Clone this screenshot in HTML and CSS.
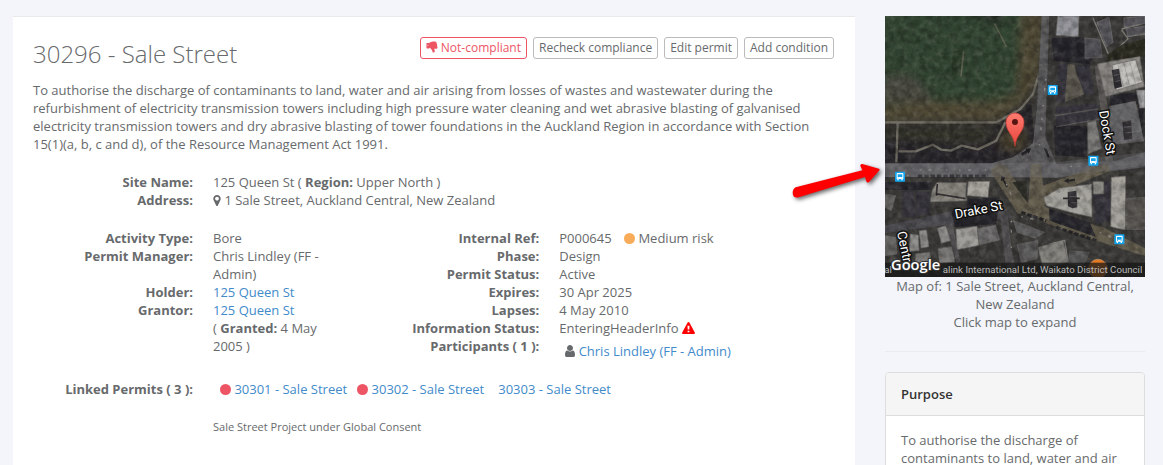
FILE: index.html
```html
<!DOCTYPE html>
<html lang="en">
<head>
<meta charset="utf-8">
<title>30296 - Sale Street</title>
<link rel="stylesheet" href="styles.css">
</head>
<body>
<div class="page">
  <main class="permit">
    <header class="permit-header">
      <h1 class="permit-title">30296 - Sale Street</h1>
      <div class="actions">
        <button type="button" class="btn btn-danger"><svg class="icon icon-thumb" viewBox="0 0 1664 1792" aria-hidden="true"><path d="M320 576q0 26-19 45t-45 19q-27 0-45.500-19t-18.500-45q0-27 18.500-45.500t45.500-18.500q26 0 45 18.500t19 45.500zM480 960v-640q0-26-19-45t-45-19h-288q-26 0-45 19t-19 45v640q0 26 19 45t45 19h288q26 0 45-19t19-45zM1600 891q0-86-55-149 15-44 15-76 3-76-43-137 17-56 0-117-15-57-54-94 9-112-49-181-64-76-197-78h-129q-66 0-144 15.500t-121.500 29-120.500 39.500q-123 43-158 44-26 1-45 19.500t-19 44.500v641q0 25 18 43.500t43 20.500q24 2 76 59t101 121q68 87 101 120 18 18 31 48t17.500 48.500 13.500 60.500q7 39 12.500 61t19.500 52 34 50q19 19 45 19 46 0 82.500-10.500t60-26 40-40.500 24-45 12-50 5-45 .5-39q0-38-9.500-76t-19-60-27.500-56q-3-6-10-18t-11-22-8-24h277q78 0 135-57t57-135z"/></svg> Not-compliant</button>
        <button type="button" class="btn">Recheck compliance</button>
        <button type="button" class="btn">Edit permit</button>
        <button type="button" class="btn">Add condition</button>
      </div>
    </header>
    <p class="description">To authorise the discharge of contaminants to land, water and air arising from losses of wastes and wastewater during the refurbishment of electricity transmission towers including high pressure water cleaning and wet abrasive blasting of galvanised electricity transmission towers and dry abrasive blasting of tower foundations in the Auckland Region in accordance with Section 15(1)(a, b, c and d), of the Resource Management Act 1991.</p>

    <dl class="details">
      <dt>Site Name:</dt><dd>125 Queen St ( <b>Region:</b> Upper North )</dd>
      <dt>Address:</dt><dd><svg class="icon icon-marker" viewBox="0 0 1024 1792" aria-hidden="true"><path d="M768 640q0-106-75-181t-181-75-181 75-75 181 75 181 181 75 181-75 75-181zM1024 640q0 109-33 179l-364 774q-16 33-47.500 52t-67.500 19-67.500-19-46.500-52l-365-774q-33-70-33-179 0-212 150-362t362-150 362 150 150 362z"/></svg> 1 Sale Street, Auckland Central, New Zealand</dd>
    </dl>

    <div class="columns">
      <dl class="details">
        <dt>Activity Type:</dt><dd>Bore</dd>
        <dt>Permit Manager:</dt><dd>Chris Lindley (FF - Admin)</dd>
        <dt>Holder:</dt><dd><a href="#">125 Queen St</a></dd>
        <dt>Grantor:</dt><dd><a href="#">125 Queen St</a><br>( <b>Granted:</b> 4 May 2005&nbsp;)</dd>
      </dl>
      <dl class="details">
        <dt>Internal Ref:</dt><dd>P000645 <span class="risk"><i class="dot dot-medium"></i> Medium risk</span></dd>
        <dt>Phase:</dt><dd>Design</dd>
        <dt>Permit Status:</dt><dd>Active</dd>
        <dt>Expires:</dt><dd>30 Apr 2025</dd>
        <dt>Lapses:</dt><dd>4 May 2010</dd>
        <dt>Information Status:</dt><dd>EnteringHeaderInfo <svg class="icon icon-warning" viewBox="0 0 13 12" role="img" aria-label="Warning"><path fill-rule="evenodd" d="M6.500 0Q7 0 7.400.6L12.800 10.600Q13.300 12 12 12H1Q-.3 12 .2 10.600L5.600.6Q6 0 6.500 0ZM5.500 3.700L5.700 7.600H7.300L7.500 3.700ZM5.600 8.700V10.300H7.400V8.700Z"/></svg></dd>
        <dt>Participants ( 1 ):</dt><dd class="participants"><svg class="icon icon-user" viewBox="0 0 1280 1792" aria-hidden="true"><path d="M1280 1399q0 109-62.500 187t-150.500 78h-854q-88 0-150.500-78t-62.500-187q0-85 8.500-160.500t31.500-152 58.500-131 94-89 134.500-34.500q131 128 313 128t313-128q76 0 134.500 34.500t94 89 58.500 131 31.500 152 8.500 160.500zM1024 512q0 159-112.500 271.500t-271.500 112.500-271.500-112.500-112.500-271.500 112.500-271.500 271.500-112.500 271.500 112.500 112.500 271.500z"/></svg> <a href="#">Chris Lindley (FF - Admin)</a></dd>
      </dl>
    </div>

    <dl class="details">
      <dt>Linked Permits ( 3 ):</dt>
      <dd class="linked-list">
        <span><i class="dot dot-high"></i> <a href="#">30301 - Sale Street</a></span>
        <span><i class="dot dot-high"></i> <a href="#">30302 - Sale Street</a></span>
        <span class="unflagged"><a href="#">30303 - Sale Street</a></span>
      </dd>
    </dl>
    <p class="project">Sale Street Project under Global Consent</p>
  </main>

  <aside class="sidebar">
    <svg class="map" viewBox="6 6 780 783" role="img" aria-label="Satellite map of 1 Sale Street">
      <defs>
        <filter id="soft" x="-5%" y="-5%" width="110%" height="110%"><feGaussianBlur stdDeviation="12"/></filter>
        <filter id="grain" x="0" y="0" width="100%" height="100%"><feTurbulence type="fractalNoise" baseFrequency=".055" numOctaves="3" seed="8"/><feColorMatrix values="0 0 0 0 .5  0 0 0 0 .48  0 0 0 0 .42  1.800 0 0 0 -.75"/></filter>
        <filter id="shade" x="0" y="0" width="100%" height="100%"><feTurbulence type="fractalNoise" baseFrequency=".045" numOctaves="3" seed="21"/><feColorMatrix values="0 0 0 0 0  0 0 0 0 0  0 0 0 0 0  2.500 0 0 0 -.95"/></filter>
        <linearGradient id="pin" x1="0" y1="0" x2="0" y2="1"><stop offset="0" stop-color="#ff7c70"/><stop offset="1" stop-color="#e8453c"/></linearGradient>
        <g id="bus"><rect x="-15" y="-15" width="30" height="30" rx="2" fill="#12a5ee"/><path fill="#fff" fill-rule="evenodd" d="M-7-11H7Q10-11 10-8V7H8V11H4V7H-4V11H-8V7H-10V-8Q-10-11-7-11ZM-7-7V1H7V-7ZM-7 3V5H-4V3ZM4 3V5H7V3Z"/></g>
      </defs>
      <rect x="6" y="6" width="780" height="783" fill="#3b3a38"/>
      <path fill="#28262a" d="M6 330H350L440 210 460 440 340 450H6Z"/>
      <g filter="url(#soft)">
        <path fill="#324530" d="M-20-20H420V120L390 250 330 280H-20Z"/>
        <path fill="#4a4a40" d="M-10 195L70 180 115 210 150 262-10 268Z"/>
        <path fill="#504a36" d="M-10 275L120 262 330 262 400 240 415-10H482L470 180 430 260 345 320-10 322Z"/>
        <path fill="#36352c" d="M-10 340H340L300 390-10 372Z"/>
        <path fill="#4b432f" d="M355 350L430 345 425 410 350 405Z"/>
        <path fill="#201f22" d="M300-5H360V20H300Z"/>
      </g>
      <path fill="#2b3b29" d="M210 112H235V183H206Z"/>
      <path fill="none" stroke="#5c5e4c" stroke-width="5" d="M242 112L234 188M334 28L370 98"/>
      <g fill="none" stroke="#706d64" stroke-width="7" stroke-linejoin="round">
        <path d="M6 325H340L412 285 450 240 466 185"/><path d="M44 326L40 445M46 412H98L150 392 175 407 205 410 236 395 285 406 340 380 367 325"/>
      </g>
      <!-- roads -->
      <path fill="#5b5a5c" d="M476 6H499L493 180 487 370 520 450 700 440 786 415V460L520 492 330 489H6V448H325L390 430 450 388 462 280Z"/>
      <path fill="#4b4a4f" d="M6 635L130 608 210 590 360 580 390 610 205 630 6 658Z"/>
      <path fill="#625c4d" d="M322 472L345 448 371 455 436 568 444 450 474 450 480 515 560 485 640 455 675 449 682 470 560 520 490 542 484 575 530 605 660 640 786 703V726L640 680 495 630 450 602 405 600Z"/>
      <path fill="#525052" d="M350 590L372 585 385 700 402 789H372ZM188 630L208 628 232 740 222 750Z"/>
      <path fill="#5a5756" d="M634 155L650 155 673 270 690 440 668 445 653 285Z"/>
      <path fill="#2c2c27" d="M388 505L430 500 434 566 410 535Z"/>
      <!-- dark blocks -->
      <g fill="#26252b">
        <path d="M505 72L600 70 632 130 618 150 512 140Z"/><path d="M512 335H612V430L517 424Z"/><path d="M6 505H145V528H6Z"/><path d="M205 590L215 640 340 630 345 590Z"/><path d="M498 585L620 625 638 668 500 620Z"/><path d="M256 555L350 550 350 580 250 588Z"/><path d="M682 245L757 235 782 285 780 400 765 270 680 275Z"/>
      </g>
      <g fill="#37353d"><path d="M526 148H556L551 265H520Z"/><path d="M580 155L618 150 633 238 590 245Z"/><path d="M518 280L645 268 650 320 520 340Z"/><path d="M57 532L92 528 98 610 60 608ZM98 530L140 535 140 602 100 603Z"/><path d="M628 510L680 500 685 620 636 630Z"/></g>
      <path fill="#5a564e" d="M554 150L575 152 578 175 605 240 545 265Z"/>
      <path stroke="#575654" stroke-width="4" fill="none" d="M516 305L645 285M520 338L648 316"/>
      <!-- roofs -->
      <g stroke="#6a6866" stroke-width="2">
        <path fill="#94959b" d="M524 6H588L586 68 519 64Z"/>
        <path fill="#4e4e54" d="M606 72L650 76 658 130 606 133Z"/>
        <path fill="#8b8884" d="M643 150L770 127 784 218 668 247Z"/>
        <path fill="#c3c1bd" d="M687 153L758 137 778 205 700 229Z"/>
        <path fill="#a5a5a8" d="M760 228H786V282H770Z"/>
        <path fill="#666568" d="M680 277L757 262 782 381 680 392Z"/>
        <path fill="#7c7a78" d="M614 326L638 320 656 403 616 419Z"/>
        <path fill="#89877f" d="M162 506L250 506 248 543 251 560 142 563 148 528Z"/>
        <path fill="#a8a69e" d="M256 503L320 502 315 550 252 545Z"/>
        <path fill="#a5a39d" d="M482 550L530 522 626 510 627 610 550 592 490 575Z"/>
        <path fill="#a5a39c" d="M685 490L728 486 727 648 683 638Z"/>
        <path fill="#8d8b85" d="M630 503H662V540H632Z"/>
        <path fill="#575450" d="M729 554L786 550V646H729Z"/>
        <path fill="#a09e9a" d="M219 646L282 637 288 694 222 707Z"/>
        <path fill="#6d6c6c" d="M283 644L338 634 350 678 290 692Z"/>
        <path fill="#8f8e8c" d="M82 660L106 663 108 710 78 712ZM108 650L130 648 138 698 114 702ZM163 643L188 635 203 680 175 688Z"/>
        <path fill="#7c7b79" d="M98 720L140 715 145 742 98 748ZM165 704L206 698 216 744 170 748Z"/>
        <path fill="#85837e" d="M465 700L540 680 556 745 480 760Z"/>
        <path fill="#5c5b5c" d="M392 620L485 655 455 672 402 655ZM402 692L465 680 462 735 415 745ZM560 710L620 715 600 755 555 748Z"/>
        <path fill="#666463" d="M6 540L38 545 25 590 6 580ZM6 665L38 670 42 720 6 725Z"/>
      </g>
      <g fill="none" stroke="#9b9994" stroke-width="2"><path d="M705 150L722 222M722 146L740 217M740 142L758 211"/></g>
      <g fill="#333135"><path d="M686 168L708 164 717 218 695 224Z"/><path d="M718 324L744 319 748 374 723 378Z"/><path d="M554 534L580 530 583 580 568 583 555 577Z"/></g>
      <g fill="none" stroke="#2c2a2c" stroke-width="5"><path d="M163 540L248 554M163 510L160 545M540 553H590"/></g>
      <g fill="none" stroke="#6b696b" stroke-width="2"><path d="M692 185L710 181M696 203L713 199M724 340L746 337M726 357L747 354M560 548H580M562 566H582"/></g>
      <g fill="none" stroke="#7e7b76" stroke-width="4"><path d="M630 12L676 120M716 45L775 30M728 68L786 60M716 48L735 74 690 118M500 690L545 680 555 742"/></g>
      <g fill="#56555a" stroke="#77757a" stroke-width="2"><path d="M642 25L678 10 690 85 670 98ZM722 12L786 6V28L724 40ZM730 45L786 36V57L735 68Z"/></g>
      <path fill="#2c2c22" d="M678 118L716 92 786 75V130L770 127 670 142Z"/>
      <path fill="#222023" d="M414 418L430 409 427 404 445 403 437 419 434 415 418 426ZM482 402L491 405 500 430 494 430ZM355 484L368 493 363 496 375 518 370 521 359 499 354 501ZM543 502L557 492 556 497 576 494V500L557 503 558 508Z"/>
      <g fill="none" stroke="#8c8b87" stroke-width="4" stroke-dasharray="5 22 9 42 4 36"><path d="M72 484H95M110 468H330M370 510L398 575M488 195L466 430M415 608L480 622M385 620V720M562 457H592M650 655L760 700"/></g>
      <path fill="none" stroke="#242326" stroke-width="9" stroke-dasharray="13 6" d="M105 486H315M415 595L490 620M520 640L640 680"/>
      <rect x="6" y="6" width="780" height="783" filter="url(#grain)" opacity=".2"/>
      <path d="M440 6H786V789H6V330H350L430 260Z" filter="url(#shade)" opacity=".25"/>
      <!-- translucent road overlay -->
      <path fill="#8a8a92" opacity=".22" d="M6 448H325L520 445 786 415V455L520 490 6 489Z"/>
      <!-- map labels -->
      <circle cx="645" cy="764" r="28" fill="#e77b24" stroke="#b2845c" stroke-width="3"/>
      <rect x="6" y="746" width="780" height="43" fill="#171717" opacity=".75"/>
      <g class="street">
        <text transform="translate(218 614) rotate(-11)">Drake St</text>
        <text transform="translate(648 292) rotate(80)">Dock St</text>
        <text transform="translate(42 655) rotate(78)">Centr</text>
      </g>
      <text class="copyright" x="778" y="777" text-anchor="end">alink International Ltd, Waikato District Council</text>
      <text class="copyright" x="4" y="777">al</text>
      <text class="google" x="24" y="768">Google</text>
      <use href="#bus" x="509" y="228"/><use href="#bus" x="631" y="440"/><use href="#bus" x="51" y="488"/><use href="#bus" x="709" y="676"/>
      <path fill="url(#pin)" stroke="#c63b35" stroke-width="2" d="M396 397C394 362 369 356 369 324A27 27 0 0 1 423 324C423 356 398 362 396 397Z"/>
      <circle cx="396" cy="324" r="9" fill="#591512"/>
    </svg>
    <p class="map-caption">Map of: 1 Sale Street, Auckland Central, New Zealand<br>Click map to expand</p>
    <hr class="divider">
    <section class="panel">
      <h2 class="panel-heading">Purpose</h2>
      <p class="panel-body">To authorise the discharge of contaminants to land, water and air</p>
    </section>
    <svg class="pointer" viewBox="0 0 270 132" aria-hidden="true"><path fill="#f00" d="M17 79L217 28 211 15Q210 8 217 9L267 23Q271 26 267 29L238 62Q231 68 229 61L225 48 26 109Q9 113 8 96 8 84 17 79Z"/></svg>
  </aside>
</div>
</body>
</html>
```
FILE: styles.css
```css
* { box-sizing: border-box; }

body {
  margin: 0;
  background: #f3f5fa;
  color: #676a6c;
  font: 13px/18px "Open Sans", "Noto Sans", sans-serif;
}

a { color: #428bca; text-decoration: none; }
p, dl, dd, h1, h2 { margin: 0; }
b, dt { font-weight: 700; }

.page {
  display: grid;
  grid-template-columns: 1fr 260px;
  gap: 30px;
  height: 100vh;
  overflow: hidden;
  padding: 16px 18px 0 13px;
}

.permit {
  padding: 20px 21px 20px 20px;
  background: #fff;
  border-top: 1px solid #e7eaec;
}

.permit-header {
  display: flex;
  justify-content: space-between;
  align-items: flex-start;
  margin-bottom: 10px;
}

.permit-title { font-size: 24px; font-weight: 300; line-height: 34px; }

.actions { display: flex; gap: 6px; }

.btn {
  height: 22px;
  padding: 0 5px;
  border: 1px solid #bbb;
  border-radius: 3px;
  background: #fff;
  color: #676a6c;
  font: 12px/18px "Open Sans", "Noto Sans", sans-serif;
  white-space: nowrap;
}

.btn-danger { border-color: #ed5565; color: #ed5565; }

.icon { height: 13px; fill: currentColor; vertical-align: -2px; }
.icon-thumb { width: 12px; }
.icon-marker { width: 8px; }
.icon-user { width: 10px; height: 14px; }
.icon-warning { width: 13px; height: 12px; fill: #f00; vertical-align: -1px; }

.description { margin-bottom: 20px; }

.details {
  display: grid;
  grid-template-columns: 160px 1fr;
  column-gap: 20px;
  align-content: start;
  margin-bottom: 20px;
}

.details dt { text-align: right; white-space: nowrap; }

.columns {
  display: grid;
  grid-template-columns: repeat(12, 1fr);
  column-gap: 30px;
}

.columns .details:first-child { grid-column: span 5; }
.columns .details:last-child { grid-column: span 7; }

.risk { margin-left: 9px; }

.dot {
  display: inline-block;
  width: 11px;
  height: 11px;
  border-radius: 50%;
  vertical-align: -1px;
}

.dot-medium { background: #f8ac59; }
.dot-high { background: #ed5565; }

.participants { padding: 5px 0 0 6px; }

.linked-list { display: flex; flex-wrap: wrap; gap: 10px; padding-left: 7px; }
.unflagged { margin-left: 4px; }

.project { padding-left: 180px; font-size: 11px; }

.sidebar { position: relative; }

.map { display: block; width: 100%; }
.street { fill: #fff; stroke: #111; stroke-width: 9px; paint-order: stroke; font: 39px Roboto, sans-serif; }
.copyright { fill: #bbb; font: 29px Roboto, sans-serif; }
.google { fill: #fff; stroke: #333; stroke-width: 6px; paint-order: stroke; font: 600 44px "Open Sans", sans-serif; }

.map-caption { text-align: center; }

.divider {
  height: 1px;
  margin: 20px 0;
  border: 0;
  background: #e9ebef;
}

.panel { border: 1px solid #ddd; border-radius: 4px; background: #fff; overflow: hidden; }

.panel-heading {
  padding: 12px 15px;
  border-bottom: 1px solid #ddd;
  background: #f5f5f5;
  color: #333;
  font-size: 13px;
  font-weight: 600;
  line-height: 18px;
}

.panel-body { padding: 15px; }

.pointer {
  position: absolute;
  top: 145px;
  left: -95px;
  width: 90px;
  height: 44px;
  filter: drop-shadow(2px 2px 2px rgba(0, 0, 0, .6));
}
```
